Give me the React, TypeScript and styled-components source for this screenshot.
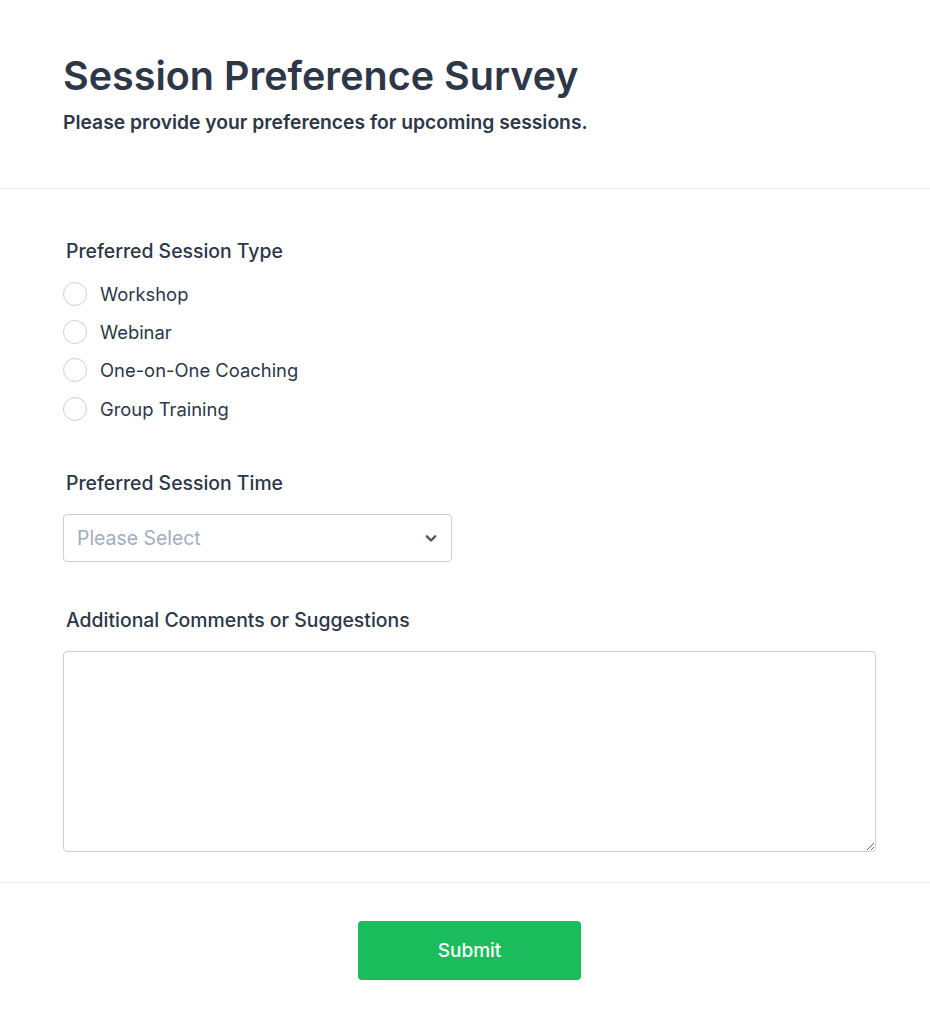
import React from "react";
import styled, { createGlobalStyle } from "styled-components";

const Global = createGlobalStyle`
  html, body { margin: 0; padding: 0; background: #ffffff; }
  body { font-family: Inter, "Noto Sans", sans-serif; color: #2d3748; }
  * { box-sizing: border-box; }
`;

const Page = styled.div`
  width: 930px;
  display: flex;
  flex-direction: column;
`;

const Header = styled.header`
  padding: 52px 63px 53px;
  border-bottom: 1px solid #e2e8f0;
`;

const Title = styled.h1`
  margin: 0;
  font-size: 39.5px;
  line-height: 48px;
  font-weight: 600;
  color: #2d3748;
`;

const Subtitle = styled.p`
  margin: 9px 0 0;
  font-size: 19.3px;
  line-height: 26px;
  font-weight: 600;
  color: #2d3748;
`;

const Body = styled.div`
  padding: 49px 54px 30px 63px;
  display: flex;
  flex-direction: column;
  gap: 45px;
`;

const Field = styled.div`
  display: flex;
  flex-direction: column;
`;

const Label = styled.label`
  display: block;
  margin: 0 0 18px 3px;
  font-size: 19.4px;
  line-height: 26px;
  font-weight: 500;
  color: #2d3748;
`;

const RadioList = styled.div`
  display: flex;
  flex-direction: column;
  gap: 14.2px;
  margin-bottom: 4px;
`;

const RadioRow = styled.label`
  display: flex;
  align-items: center;
  gap: 13px;
  font-size: 18.4px;
  line-height: 24px;
  color: #2d3748;
  cursor: pointer;
`;

const RadioCircle = styled.span`
  width: 24px;
  height: 24px;
  border-radius: 50%;
  border: 1px solid #c8d0da;
  background: #fff;
  flex: none;
`;

const SelectBox = styled.div`
  width: 389px;
  height: 48px;
  border: 1px solid #c8d0da;
  border-radius: 4px;
  display: flex;
  align-items: center;
  justify-content: space-between;
  padding: 0 10px 0 13px;
  font-size: 19.4px;
  color: #a0aec0;
  background: #fff;
`;

const TextArea = styled.textarea`
  width: 813px;
  height: 201px;
  border: 1px solid #c8d0da;
  border-radius: 4px;
  font-family: inherit;
  font-size: 16px;
  padding: 10px;
  display: block;
`;

const Footer = styled.footer`
  border-top: 1px solid #e2e8f0;
  display: flex;
  justify-content: center;
  padding: 38px 54px 49px 63px;
`;

const SubmitButton = styled.button`
  width: 223px;
  height: 59px;
  border: none;
  border-radius: 4px;
  background: #1abc5c;
  color: #ffffff;
  font-family: inherit;
  font-size: 19px;
  font-weight: 500;
  cursor: pointer;
`;

const options = ["Workshop", "Webinar", "One-on-One Coaching", "Group Training"];

export default function App() {
  return (
    <>
      <Global />
      <Page>
        <Header>
          <Title>Session Preference Survey</Title>
          <Subtitle>Please provide your preferences for upcoming sessions.</Subtitle>
        </Header>
        <Body>
          <Field>
            <Label>Preferred Session Type</Label>
            <RadioList>
              {options.map((o) => (
                <RadioRow key={o}>
                  <RadioCircle />
                  {o}
                </RadioRow>
              ))}
            </RadioList>
          </Field>
          <Field>
            <Label>Preferred Session Time</Label>
            <SelectBox>
              <span>Please Select</span>
              <svg width="20" height="20" viewBox="0 0 24 24" fill="none" stroke="#4a5568" strokeWidth="2.8" strokeLinecap="round" strokeLinejoin="round">
                <polyline points="7 10 12 15 17 10" />
              </svg>
            </SelectBox>
          </Field>
          <Field>
            <Label>Additional Comments or Suggestions</Label>
            <TextArea />
          </Field>
        </Body>
        <Footer>
          <SubmitButton>Submit</SubmitButton>
        </Footer>
      </Page>
    </>
  );
}
